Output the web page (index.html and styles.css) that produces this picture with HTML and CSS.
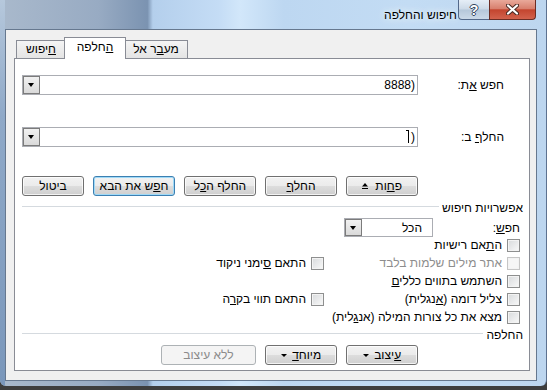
FILE: index.html
```html
<!DOCTYPE html>
<html lang="he">
<head>
    <meta charset="UTF-8">
    <meta name="viewport" content="width=device-width, initial-scale=1.0">
    <title>חיפוש והחלפה</title>
    <link rel="stylesheet" href="styles.css">
</head>
<body>
    <div class="window">
        <div class="titlebar">
            <span class="title">חיפוש והחלפה</span>
            <div class="caption-buttons">
                <span class="cap-help">?</span>
                <span class="cap-close">
                    <svg width="13" height="11" viewBox="0 0 13 11">
                        <path d="M2 1.5 L11 9.5 M11 1.5 L2 9.5" stroke="#4b2a24" stroke-width="4.2" stroke-linecap="round"/>
                        <path d="M2 1.5 L11 9.5 M11 1.5 L2 9.5" stroke="#fff" stroke-width="2.2" stroke-linecap="round"/>
                    </svg>
                </span>
            </div>
        </div>

        <div class="client" dir="rtl">
            <div class="tabs">
                <span class="tab tab-goto">מע<u>ב</u>ר אל</span>
                <span class="tab tab-active"><u>ה</u>חלפה</span>
                <span class="tab tab-find"><u>ח</u>יפוש</span>
            </div>

            <div class="panel">
                <div class="field-row">
                    <label class="field-label">חפש <u>א</u>ת:</label>
                    <div class="combo">
                        <span class="combo-value combo-ltr">8888)</span>
                        <span class="combo-arrow"></span>
                    </div>
                </div>

                <div class="field-row field-row-next">
                    <label class="field-label">החל<u>ף</u> ב:</label>
                    <div class="combo">
                        <span class="combo-value combo-ltr"><span class="caret"></span>)</span>
                        <span class="combo-arrow"></span>
                    </div>
                </div>

                <div class="button-row">
                    <button class="btn">פ<u>ח</u>ות
                        <svg class="less-icon" width="6" height="7" viewBox="0 0 6 7">
                            <path d="M3 0 L6 3.5 L0 3.5 Z" fill="#000"/>
                            <rect x="0" y="5" width="6" height="1" fill="#000"/>
                        </svg>
                    </button>
                    <button class="btn">החל<u>ף</u></button>
                    <button class="btn">החלף ה<u>כ</u>ל</button>
                    <button class="btn btn-default">ח<u>פ</u>ש את הבא</button>
                    <button class="btn btn-cancel">ביטול</button>
                </div>

                <div class="group-title"><span>אפשרויות חיפוש</span></div>

                <div class="search-row">
                    <label class="search-label">חפ<u>ש</u>:</label>
                    <div class="combo combo-small">
                        <span class="combo-value">הכל</span>
                        <span class="combo-arrow"></span>
                    </div>
                </div>

                <div class="options">
                    <label class="check check-wide"><span class="box"></span><span>ה<u>ת</u>אם רישיות</span></label>
                    <label class="check check-off"><span class="box"></span><span>אתר מילים שלמות בלבד</span></label>
                    <label class="check"><span class="box"></span><span>התאם <u>ס</u>ימני ניקוד</span></label>
                    <label class="check check-wide"><span class="box"></span><span>השתמש בתווים כללי<u>ם</u></span></label>
                    <label class="check"><span class="box"></span><span>צליל דומה (<u>א</u>נגלית)</span></label>
                    <label class="check"><span class="box"></span><span>התאם תווי בק<u>ר</u>ה</span></label>
                    <label class="check check-wide"><span class="box"></span><span>מצא את כל צורות המילה (אנ<u>ג</u>לית)</span></label>
                </div>

                <div class="group-title group-replace"><span>החלפה</span></div>

                <div class="button-row button-row-bottom">
                    <button class="btn"><u>ע</u>יצוב <span class="drop"></span></button>
                    <button class="btn">מיוח<u>ד</u> <span class="drop"></span></button>
                    <button class="btn btn-wide" disabled>ללא עיצוב</button>
                </div>
            </div>
        </div>
    </div>
</body>
</html>
```

FILE: styles.css
```css
*{
    box-sizing: border-box;
}
html, body{
    margin: 0;
}
body{
    width: 547px;
    height: 390px;
    overflow: hidden;
    background: #3e3e3e;
    font-family: "Liberation Sans", "DejaVu Sans", sans-serif;
    font-size: 12px;
    color: #000;
}

/* window frame */
.window{
    height: 386px;
    padding: 0 9px 5px 5px;
    display: flex;
    flex-direction: column;
    border-right: 1px solid #5d7290;
    border-radius: 0 0 6px 6px;
    background:
        linear-gradient(180deg, #b6c8dc 0%, #8fa9c8 30%, #7a97bb 100%) left top / 5px 100% no-repeat,
        linear-gradient(90deg, #a9b9cc 0%, #98abc3 18%, #7b93b1 27%, #b4cfec 28%, #c4dcf5 40%, #d2e7fa 44%, #bdd7f1 52%, #c3dcf4 75%, #bdd6ef 100%);
}
.titlebar{
    height: 29px;
    display: flex;
    justify-content: flex-end;
    align-items: flex-start;
}
.title{
    margin-top: 8px;
    margin-right: 1px;
    font-size: 12px;
    text-shadow: 0 0 6px #eaf4ff, 0 0 10px #eaf4ff;
}
.caption-buttons{
    display: flex;
    margin-right: 1px;
}
.cap-help, .cap-close{
    height: 20px;
    display: flex;
    align-items: center;
    justify-content: center;
    border: 1px solid #53698a;
    border-top: 0;
}
.cap-help{
    width: 31px;
    border-right: 0;
    border-radius: 0 0 0 4px;
    background: linear-gradient(#e6eef7 0%, #ccd9e7 48%, #b5c7da 52%, #cbd9e8 100%);
    color: #fff;
    font-weight: bold;
    font-size: 14px;
    text-shadow: 1px 0 #34455d, -1px 0 #34455d, 0 1px #34455d, 0 -1px #34455d;
}
.cap-close{
    width: 47px;
    border-radius: 0 0 4px 0;
    border-color: #6b2d25;
    background: linear-gradient(#e9a99a 0%, #d8806e 45%, #c3452f 52%, #d2624d 100%);
}

/* client area */
.client{
    flex: 1;
    display: flex;
    flex-direction: column;
    background: #f0f0f0;
    border: 1px solid #66788f;
}
.tabs{
    height: 28px;
    display: flex;
    justify-content: flex-end;
    align-items: flex-end;
    padding-left: 10px;
}
.tab{
    height: 18px;
    line-height: 16px;
    text-align: center;
    border: 1px solid #898c95;
    border-bottom: 0;
    background: linear-gradient(#f4f4f4, #e4e4e4);
}
.tab-find{
    width: 50px;
}
.tab-goto{
    width: 64px;
}
.tab-active{
    position: relative;
    width: 62px;
    height: 22px;
    line-height: 19px;
    margin: 0 -2px -1px;
    background: #fff;
}

.panel{
    flex: 1;
    margin: 0 6px 9px 8px;
    padding: 0 9px 0 7px;
    background: #fff;
    border: 1px solid #898c95;
}

/* find / replace fields */
.field-row{
    display: flex;
    align-items: center;
    margin-top: 16px;
}
.field-row-next{
    margin-top: 32px;
}
.field-label{
    width: 102px;
    padding-right: 16px;
}
.combo{
    flex: 1;
    height: 20px;
    display: flex;
    align-items: center;
    border: 1px solid #abadb3;
    background: #fff;
}
.combo-value{
    flex: 1;
    padding-right: 2px;
    white-space: nowrap;
}
.combo-ltr{
    direction: ltr;
    text-align: right;
}
.combo-arrow{
    position: relative;
    width: 17px;
    height: 18px;
    border: 1px solid #7b7b7b;
    background: linear-gradient(#f1f1f1, #dadada);
}
.combo-arrow::after{
    content: "";
    position: absolute;
    left: 4px;
    top: 6px;
    border-left: 3.5px solid transparent;
    border-right: 3.5px solid transparent;
    border-top: 4px solid #000;
}
.caret{
    display: inline-block;
    width: 3px;
    height: 13px;
    margin-right: 2px;
    vertical-align: -2px;
    border-right: 1px solid #000;
    border-top: 1px solid #000;
}

/* buttons */
.button-row{
    display: flex;
    gap: 9px;
    margin-top: 29px;
    margin-right: 102px;
}
.btn{
    width: 72px;
    height: 20px;
    padding: 0;
    font-family: inherit;
    font-size: 12px;
    color: #000;
    border: 1px solid #707070;
    border-radius: 3px;
    background: linear-gradient(#f2f2f2 0%, #ebebeb 50%, #dddddd 50%, #cfcfcf 100%);
    box-shadow: inset 0 0 0 1px rgba(255, 255, 255, 0.75);
}
.btn-default{
    width: 82px;
    border-color: #3c7fb1;
    box-shadow: inset 0 0 0 1px #9fdaf8;
}
.btn-cancel{
    width: 62px;
}
.btn-wide{
    width: 95px;
}
.btn[disabled]{
    color: #8b8b8b;
    border-color: #adb2b5;
    background: #f4f4f4;
    box-shadow: none;
}
.less-icon{
    margin-right: 4px;
    vertical-align: 0;
}
.drop{
    display: inline-block;
    margin-right: 2px;
    vertical-align: 2px;
    border-left: 3px solid transparent;
    border-right: 3px solid transparent;
    border-top: 3px solid #000;
}

/* group headers */
.group-title{
    display: flex;
    align-items: center;
    height: 14px;
    margin-top: 5px;
    margin-right: -3px;
}
.group-title::after{
    content: "";
    flex: 1;
    height: 1px;
    margin-right: 3px;
    margin-top: -3px;
    background: #d5dadf;
}
.group-replace{
    margin-top: 2px;
}

.search-row{
    display: flex;
    align-items: center;
    margin-top: 3px;
}
.search-label{
    width: 87px;
}
.combo-small{
    flex: 0 0 89px;
    height: 19px;
}
.combo-small .combo-value{
    padding-right: 10px;
}
.combo-small .combo-arrow{
    height: 17px;
}

/* checkboxes */
.options{
    display: grid;
    grid-template-columns: 196px 1fr;
    grid-auto-rows: 18px;
    margin-top: -1px;
}
.check{
    display: flex;
    align-items: center;
    gap: 5px;
    white-space: nowrap;
}
.check-wide{
    grid-column: 1 / -1;
}
.box{
    width: 13px;
    height: 13px;
    border: 1px solid #8e8f8f;
    background: linear-gradient(135deg, #d8dadc, #f9f9f9);
    box-shadow: inset 0 0 0 1px #f3f3f3;
}
.check-off{
    color: #8d8d8d;
}
.check-off .box{
    border-color: #c6c6c6;
    background: #f6f6f6;
}

.button-row-bottom{
    margin-top: 3px;
}
```
